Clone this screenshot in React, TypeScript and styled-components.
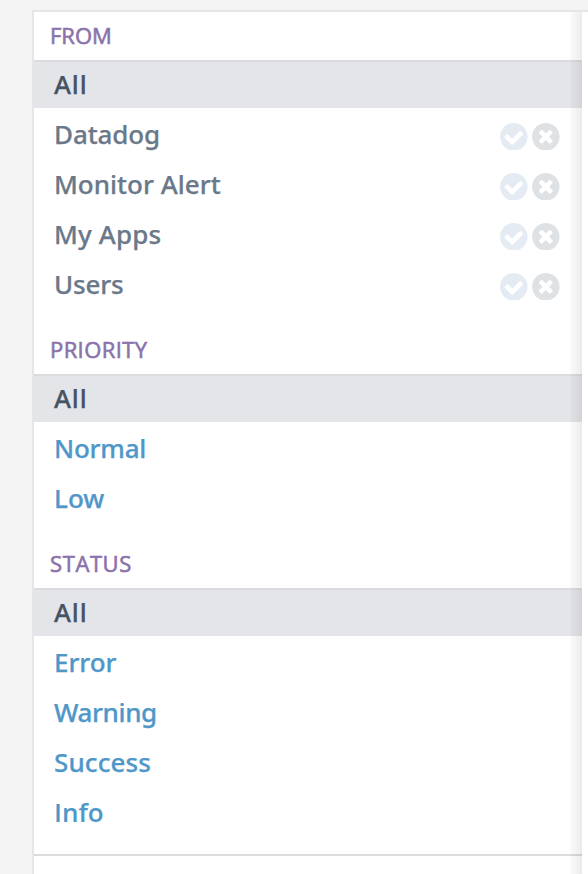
import React from 'react';
import styled, { createGlobalStyle } from 'styled-components';

const GlobalStyle = createGlobalStyle`
  * { box-sizing: border-box; }
  body {
    margin: 0;
    background: #f4f4f4;
    font-family: "Noto Sans", "Open Sans", sans-serif;
  }
`;

const Page = styled.main`
  height: 874px;
  overflow: hidden;
  padding: 10px 0 0 32px;
`;

const Panel = styled.aside`
  position: relative;
  height: 864px;
  border: 2px solid #e6e6e6;
  border-right: 0;
  border-bottom: 0;
  background: #fff;
`;

const EdgeShade = styled.div`
  position: absolute;
  top: 0;
  bottom: 0;
  left: 536px;
  width: 12px;
  background: linear-gradient(to right, rgba(0, 0, 0, 0.015), rgba(0, 0, 0, 0.08));
`;

const Facets = styled.div`
  width: 548px;
  border-bottom: 2px solid #dcdcdc;
`;

const Facet = styled.section`
  padding-bottom: 18px;
`;

const FacetTitle = styled.h2<{ $spacing: number }>`
  height: 50px;
  margin: 0;
  padding-left: 16px;
  border-bottom: 2px solid #dbdcde;
  color: #8b72ab;
  font-family: "Open Sans", sans-serif;
  font-size: 22px;
  font-weight: 400;
  line-height: 47px;
  letter-spacing: ${({ $spacing }) => $spacing}px;
  -webkit-text-stroke: 0.6px currentColor;
`;

const OptionList = styled.ul`
  margin: 0;
  padding: 0;
  list-style: none;
`;

type Tone = 'selected' | 'muted' | 'link';
const toneColor: Record<Tone, string> = {
  selected: '#455364',
  muted: '#6a7889',
  link: '#4f97c9',
};

const Label = styled.span<{ $spacing: number; $plain: boolean }>`
  font-family: ${({ $plain }) => ($plain ? '"Open Sans"' : '"Noto Sans"')}, sans-serif;
  font-size: 26px;
  font-weight: ${({ $plain }) => ($plain ? 600 : 500)};
  line-height: 44px;
  white-space: nowrap;
  letter-spacing: ${({ $spacing }) => $spacing}px;
  -webkit-text-stroke: ${({ $plain }) => ($plain ? 0 : 0.25)}px currentColor;
`;

const Option = styled.li<{ $tone: Tone }>`
  display: flex;
  align-items: center;
  justify-content: space-between;
  height: ${({ $tone }) => ($tone === 'selected' ? 46 : 50)}px;
  padding: 0 22px 0 20px;
  background: ${({ $tone }) => ($tone === 'selected' ? '#e4e5e9' : 'transparent')};
  color: ${({ $tone }) => toneColor[$tone]};

  ${Label} {
    padding: ${({ $tone }) => ($tone === 'selected' ? '0 0 2px' : '2px 0 0')};
  }
`;

const Actions = styled.div`
  display: flex;
  gap: 4.4px;
  padding-top: 7px;
`;

const Glyph = styled.svg<{ $color: string }>`
  display: block;
  width: 27.6px;
  height: 27.6px;
  fill: ${({ $color }) => $color};
`;

const DISC =
  'q0 209-103 385.5t-279.5 279.5-385.5 103-385.5-103-279.5-279.5-103-385.5 103-385.5 279.5-279.5 385.5-103 385.5 103 279.5 279.5 103 385.5z';

const CheckCircle = () => (
  <Glyph $color="#e4ebf3" viewBox="128 128 1536 1536">
    <path
      d={`M1412 734q0-28-18-46l-91-90q-19-19-45-19t-45 19l-408 407-226-226q-19-19-45-19t-45 19l-91 90q-18 18-18 46 0 27 18 45l362 362q19 19 45 19 27 0 46-19l543-543q18-18 18-45zm252 162${DISC}`}
    />
  </Glyph>
);

const TimesCircle = () => (
  <Glyph $color="#dfe2e5" viewBox="128 128 1536 1536">
    <path
      d={`M1277 1122q0-26-19-45l-181-181 181-181q19-19 19-45 0-27-19-46l-90-90q-19-19-46-19-26 0-45 19l-181 181-181-181q-19-19-45-19-27 0-46 19l-90 90q-19 19-19 46 0 26 19 45l181 181-181 181q-19 19-19 45 0 27 19 46l90 90q19 19 46 19 26 0 45-19l181-181 181 181q19 19 45 19 27 0 46-19l90-90q19-19 19-46zm387-226${DISC}`}
    />
  </Glyph>
);

interface OptionData {
  label: string;
  tone: Tone;
  spacing: number;
  plain?: boolean;
}

const facets: { title: string; spacing: number; options: OptionData[] }[] = [
  {
    title: 'FROM',
    spacing: 0,
    options: [
      { label: 'All', tone: 'selected', spacing: 0.8 },
      { label: 'Datadog', tone: 'muted', spacing: -0.1 },
      { label: 'Monitor Alert', tone: 'muted', spacing: 0 },
      { label: 'My Apps', tone: 'muted', spacing: 0.15 },
      { label: 'Users', tone: 'muted', spacing: -0.2 },
    ],
  },
  {
    title: 'PRIORITY',
    spacing: 0.4,
    options: [
      { label: 'All', tone: 'selected', spacing: 0.8 },
      { label: 'Normal', tone: 'link', spacing: -0.25 },
      { label: 'Low', tone: 'link', spacing: 0 },
    ],
  },
  {
    title: 'STATUS',
    spacing: 0.6,
    options: [
      { label: 'All', tone: 'selected', spacing: 0.8 },
      { label: 'Error', tone: 'link', spacing: -0.1 },
      { label: 'Warning', tone: 'link', spacing: -0.4 },
      { label: 'Success', tone: 'link', spacing: 0.1 },
      { label: 'Info', tone: 'link', spacing: 0, plain: true },
    ],
  },
];

export default function App() {
  return (
    <>
      <GlobalStyle />
      <Page>
        <Panel>
          <Facets>
            {facets.map((facet) => (
              <Facet key={facet.title}>
                <FacetTitle $spacing={facet.spacing}>{facet.title}</FacetTitle>
                <OptionList>
                  {facet.options.map((option) => (
                    <Option key={option.label} $tone={option.tone}>
                      <Label $spacing={option.spacing} $plain={option.plain ?? false}>
                        {option.label}
                      </Label>
                      {option.tone === 'muted' && (
                        <Actions>
                          <CheckCircle />
                          <TimesCircle />
                        </Actions>
                      )}
                    </Option>
                  ))}
                </OptionList>
              </Facet>
            ))}
          </Facets>
          <EdgeShade />
        </Panel>
      </Page>
    </>
  );
}
